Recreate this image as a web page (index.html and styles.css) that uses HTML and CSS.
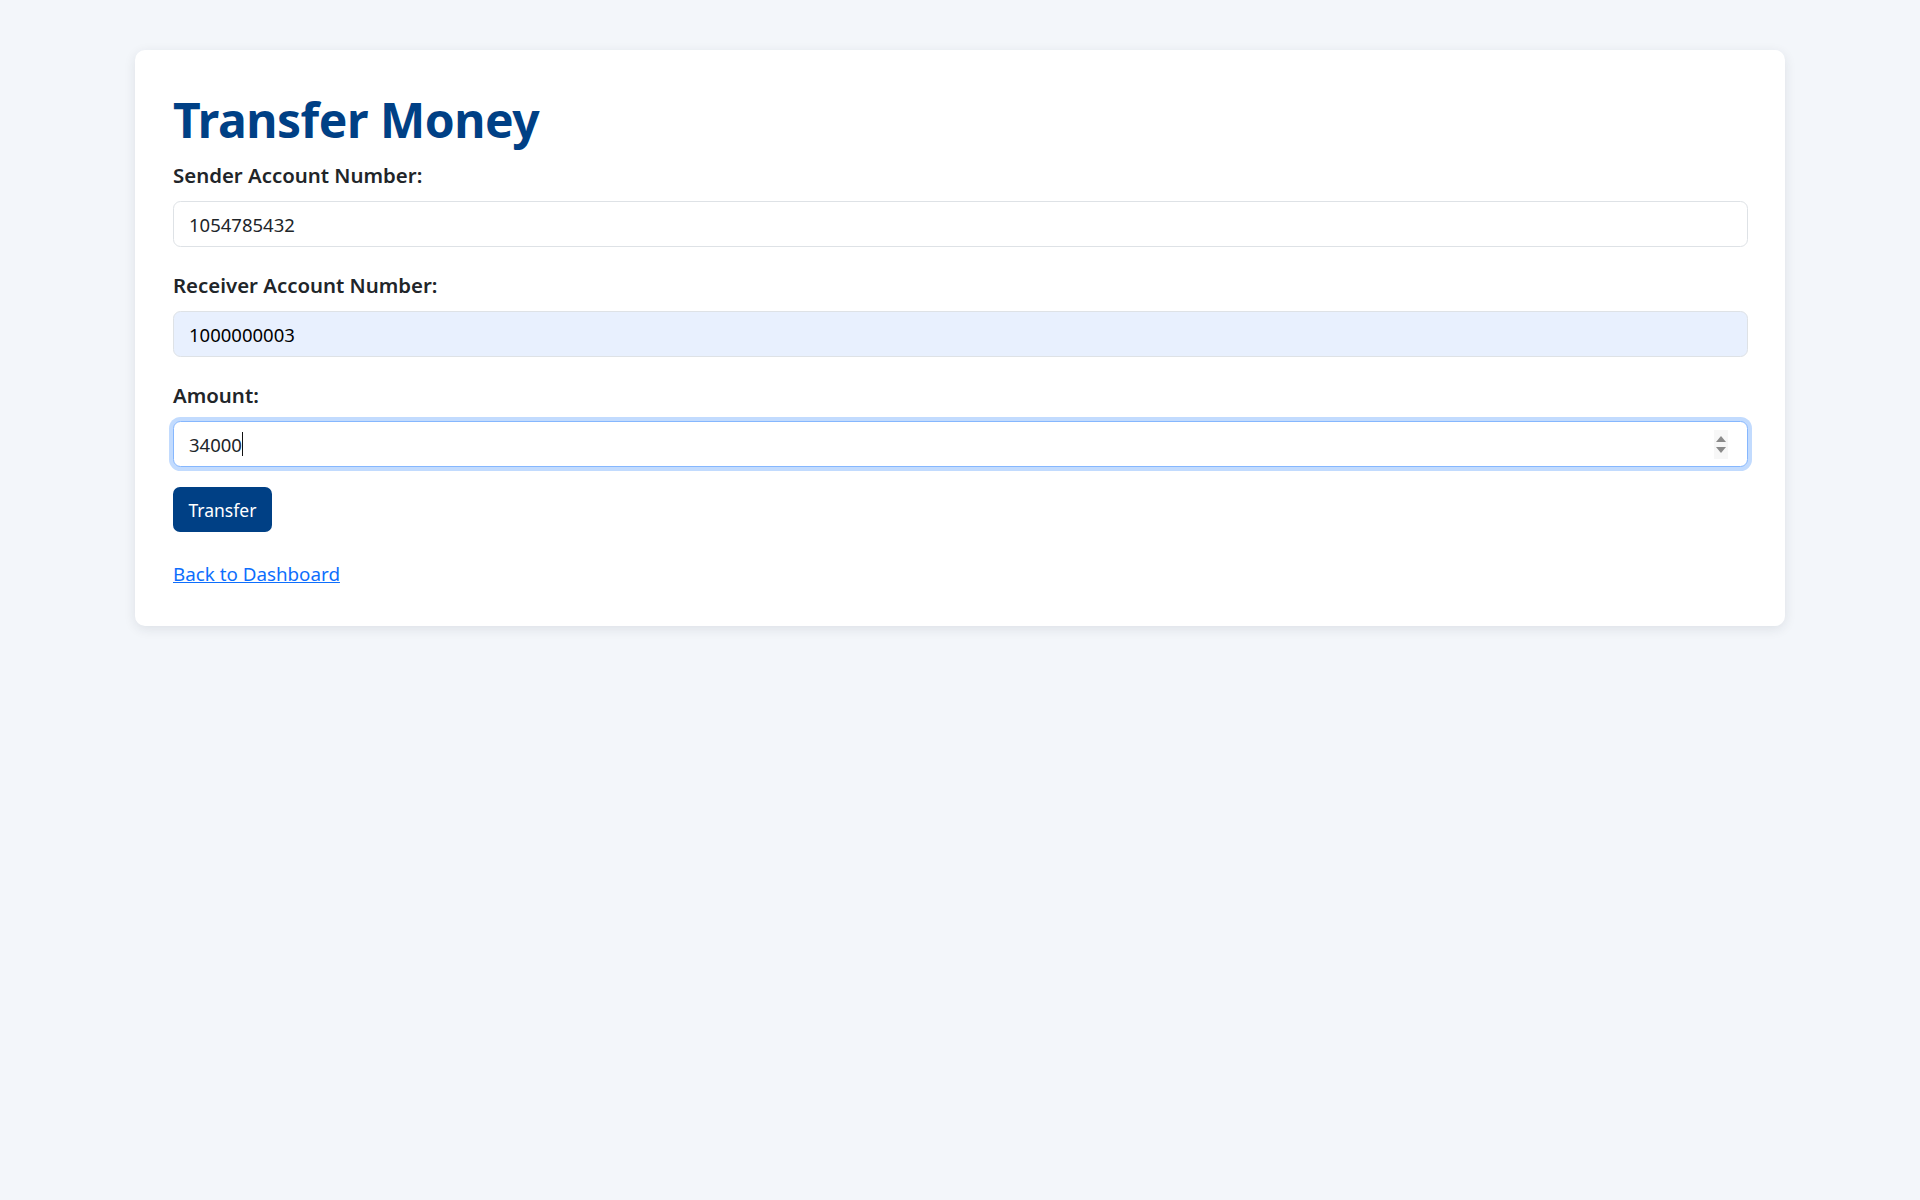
FILE: index.html
```html
<!DOCTYPE html>
<html lang="en">
<head>
<meta charset="utf-8">
<title>Transfer Money</title>
<link rel="stylesheet" href="styles.css">
</head>
<body>
  <main class="card">
    <h1 class="title">Transfer Money</h1>
    <form class="form" onsubmit="return false">
      <div class="field">
        <label class="label" for="sender">Sender Account Number:</label>
        <input class="input" id="sender" type="text" value="1054785432">
      </div>
      <div class="field">
        <label class="label" for="receiver">Receiver Account Number:</label>
        <input class="input input-autofill" id="receiver" type="text" value="1000000003">
      </div>
      <div class="field field-last">
        <label class="label" for="amount">Amount:</label>
        <div class="input-wrap">
          <input class="input input-focus" id="amount" type="text" value="34000">
          <span class="caret"></span>
          <span class="spinner">
            <span class="spin-up"></span>
            <span class="spin-down"></span>
          </span>
        </div>
      </div>
      <button class="btn" type="submit">Transfer</button>
    </form>
    <p class="back"><a class="link" href="#">Back to Dashboard</a></p>
  </main>
</body>
</html>
```

FILE: styles.css
```css
* {
  box-sizing: border-box;
}

html, body {
  margin: 0;
  padding: 0;
}

body {
  background: #f3f6fa;
  font-family: "Noto Sans", "Open Sans", "Liberation Sans", sans-serif;
  color: #212529;
  min-height: 1200px;
}

.card {
  width: 1650px;
  margin: 50px auto 0;
  background: #ffffff;
  border-radius: 10px;
  box-shadow: 0 3px 12px rgba(30, 40, 60, 0.1);
  padding: 40px 37px 39px 38px;
}

.title {
  margin: 0 0 11px;
  font-size: 48px;
  line-height: 60px;
  font-weight: 700;
  color: #004085;
  letter-spacing: -0.45px;
}

.form {
  margin: 0;
}

.field {
  margin-bottom: 24px;
}

.field-last {
  margin-bottom: 20px;
}

.label {
  display: block;
  font-size: 20.4px;
  line-height: 28px;
  font-weight: 600;
  color: #212529;
  margin-bottom: 12px;
}

.input {
  display: block;
  width: 100%;
  height: 46px;
  padding: 0 15px;
  font-family: inherit;
  font-size: 18.5px;
  color: #212529;
  background: #ffffff;
  border: 1px solid #dee2e6;
  border-radius: 7.5px;
  outline: none;
}

.input-autofill {
  background: #e8f0fe;
  color: #000000;
}

.input-wrap {
  position: relative;
}

.input-focus {
  border-color: #86b7fe;
  box-shadow: 0 0 0 4px #c2dbfe;
}

.caret {
  position: absolute;
  left: 69px;
  top: 11px;
  width: 1px;
  height: 24px;
  background: #111111;
}

.spinner {
  position: absolute;
  right: 20px;
  top: 9px;
  width: 14px;
  height: 29px;
  background: #f7f7f7;
  display: flex;
  flex-direction: column;
  align-items: center;
  justify-content: center;
  gap: 5px;
}

.spin-up {
  width: 0;
  height: 0;
  border-left: 5px solid transparent;
  border-right: 5px solid transparent;
  border-bottom: 6px solid #8a8a8a;
}

.spin-down {
  width: 0;
  height: 0;
  border-left: 5px solid transparent;
  border-right: 5px solid transparent;
  border-top: 6px solid #8a8a8a;
}

.btn {
  display: block;
  height: 45px;
  padding: 0 15.5px;
  background: #004085;
  color: #ffffff;
  font-family: inherit;
  font-size: 17.5px;
  border: none;
  border-radius: 7px;
  cursor: pointer;
}

.back {
  margin: 28.5px 0 0;
  font-size: 18.8px;
  line-height: 26px;
}

.link {
  color: #0d6efd;
  text-decoration: underline;
}
```
